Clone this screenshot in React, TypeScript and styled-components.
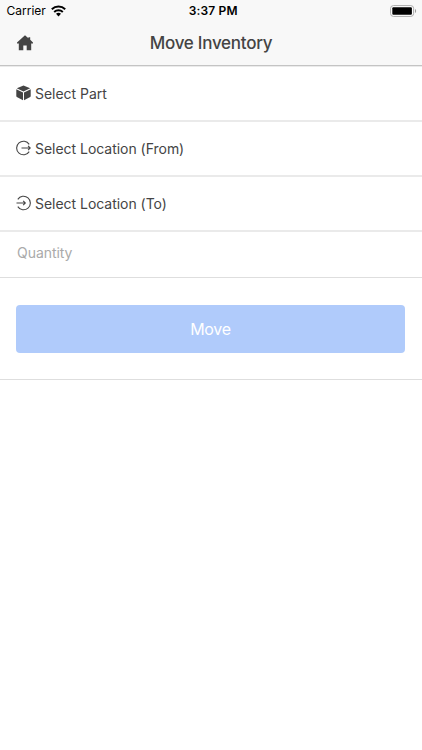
import React from "react";
import styled, { createGlobalStyle } from "styled-components";

const GlobalStyle = createGlobalStyle`
  *, *::before, *::after { box-sizing: border-box; }
  body {
    margin: 0;
    background: #fff;
    color: #444;
    font-family: Inter, "Liberation Sans", sans-serif;
  }
`;

const Screen = styled.div`
  display: flex;
  flex-direction: column;
  min-height: 750px;
  background: #fff;
`;

const Header = styled.header`
  height: 66px;
  margin-bottom: 1px;
  background: #f8f8f8;
  border-bottom: 1px solid #c4c4c4;
  box-shadow: 0 1px #ebebeb;
`;

const StatusBar = styled.div`
  display: grid;
  grid-template-columns: 1fr auto 1fr;
  align-items: center;
  height: 22px;
  padding: 0 5px 0 6.5px;
  color: #000;
`;

const Carrier = styled.div`
  display: flex;
  align-items: center;
  gap: 5px;
  font-size: 12px;
  line-height: 22px;
  letter-spacing: 0;
`;

const Clock = styled.time`
  padding-left: 3px;
  font-size: 12px;
  font-weight: 600;
  line-height: 22px;
  letter-spacing: 0.15px;
`;

const BatterySlot = styled.div`
  display: flex;
  justify-content: flex-end;
`;

const Toolbar = styled.div`
  display: grid;
  grid-template-columns: 50px 1fr 50px;
  align-items: center;
  height: 42px;
`;

const HomeButton = styled.button`
  display: flex;
  height: 42px;
  padding: 13px 0 0 17px;
  border: 0;
  background: none;
  color: #444;
`;

const Title = styled.h1`
  margin: 0;
  font-size: 17px;
  font-weight: 450;
  line-height: 42px;
  letter-spacing: -0.26px;
  text-align: center;
`;

const Row = styled.button`
  display: flex;
  align-items: center;
  gap: 4px;
  height: 55px;
  padding: 0 16px;
  border: 0;
  border-bottom: 2px solid #eaeaea;
  background: #fff;
  color: #444;
  font: 400 14px/20px Inter, sans-serif;
  letter-spacing: -0.03px;
  text-align: left;

  svg { margin-bottom: 2px; }
`;

const RowLabel = styled.span`
  padding-top: 1px;
`;

const QuantityField = styled.input`
  height: 46px;
  padding: 0 17px 4px;
  border: 0;
  border-bottom: 1px solid #dedede;
  border-radius: 0;
  outline: 0;
  background: #fff;
  font: 400 14px/20px Inter, sans-serif;
  letter-spacing: -0.05px;
  &::placeholder { color: #aaa; opacity: 1; }
`;

const Actions = styled.div`
  display: flex;
  height: 102px;
  padding: 27px 17px 26px 16px;
  border-bottom: 1px solid #dedede;
`;

const MoveButton = styled.button`
  flex: 1;
  height: 48px;
  padding: 0;
  border: 0;
  border-radius: 4px;
  background: #b0cbfb;
  color: #fff;
  font: 400 16px/24px Inter, sans-serif;
  letter-spacing: -0.3px;
`;

const WifiIcon = () => (
  <svg width="15" height="12" viewBox="0 0 15 12" fill="none" stroke="#000" strokeWidth="2">
    <path d="M.8 4.2a9.8 9.8 0 0 1 13.4 0M3.2 6.9a6.3 6.3 0 0 1 8.6 0" />
    <path d="M5 8.8a3.8 3.8 0 0 1 5 0L7.5 11.4Z" fill="#000" stroke="none" />
  </svg>
);

const BatteryIcon = () => (
  <svg width="27" height="12" viewBox="0 0 27 12">
    <rect x=".6" y=".6" width="23" height="10.8" rx="2.8" fill="#fff" stroke="#aaa" />
    <rect x="2.3" y="2.3" width="19.6" height="7.5" rx="1" fill="#000" />
    <path d="M25 4c1.5.6 1.5 3.4 0 4Z" fill="#999" />
  </svg>
);

const HomeIcon = () => (
  <svg width="16" height="16" viewBox="0 0 16 16" fill="currentColor">
    <path d="M8 .2 11.4 3.2V2.2h1.8v2.6L16 7.4v1h-1.8V15.3H9.7v-4.8H6.3v4.8H1.8V8.4H0v-1Z" />
  </svg>
);

const CubeIcon = () => (
  <svg width="15" height="16" viewBox="0 0 15 16" fill="currentColor">
    <path d="M7.5.4 14.2 3.3 7.5 6.5.8 3.3Z" />
    <path d="M.3 4.3 7 7.4v7.9L.8 12Q.3 11.7.3 11ZM14.7 4.3 8 7.4v7.9l6.2-3.3q.5-.3.5-1Z" />
  </svg>
);

const ExitIcon = () => (
  <svg width="15" height="16" viewBox="0 0 15 16" fill="none" stroke="currentColor" strokeWidth="1.1">
    <path d="M13.2 4.4a6.8 6.8 0 1 0 0 7.2M5.5 8h8.6M12.1 5.9 14.2 8l-2.1 2.1" />
  </svg>
);

const EnterIcon = () => (
  <svg width="15" height="16" viewBox="0 0 15 16" fill="none" stroke="currentColor" strokeWidth="1.1">
    <path d="M1.8 4.4a6.8 6.8 0 1 1 0 7.2M.5 8h8.8M7.2 5.9 9.3 8l-2.1 2.1" />
  </svg>
);

const rows = [
  { label: "Select Part", Icon: CubeIcon },
  { label: "Select Location (From)", Icon: ExitIcon },
  { label: "Select Location (To)", Icon: EnterIcon },
];

export default function App() {
  return (
    <>
      <GlobalStyle />
      <Screen>
        <Header>
          <StatusBar>
            <Carrier>Carrier <WifiIcon /></Carrier>
            <Clock>3:37 PM</Clock>
            <BatterySlot><BatteryIcon /></BatterySlot>
          </StatusBar>
          <Toolbar>
            <HomeButton aria-label="Home"><HomeIcon /></HomeButton>
            <Title>Move Inventory</Title>
          </Toolbar>
        </Header>
        {rows.map(({ label, Icon }) => (
          <Row key={label}>
            <Icon />
            <RowLabel>{label}</RowLabel>
          </Row>
        ))}
        <QuantityField placeholder="Quantity" inputMode="numeric" />
        <Actions>
          <MoveButton disabled>Move</MoveButton>
        </Actions>
      </Screen>
    </>
  );
}
